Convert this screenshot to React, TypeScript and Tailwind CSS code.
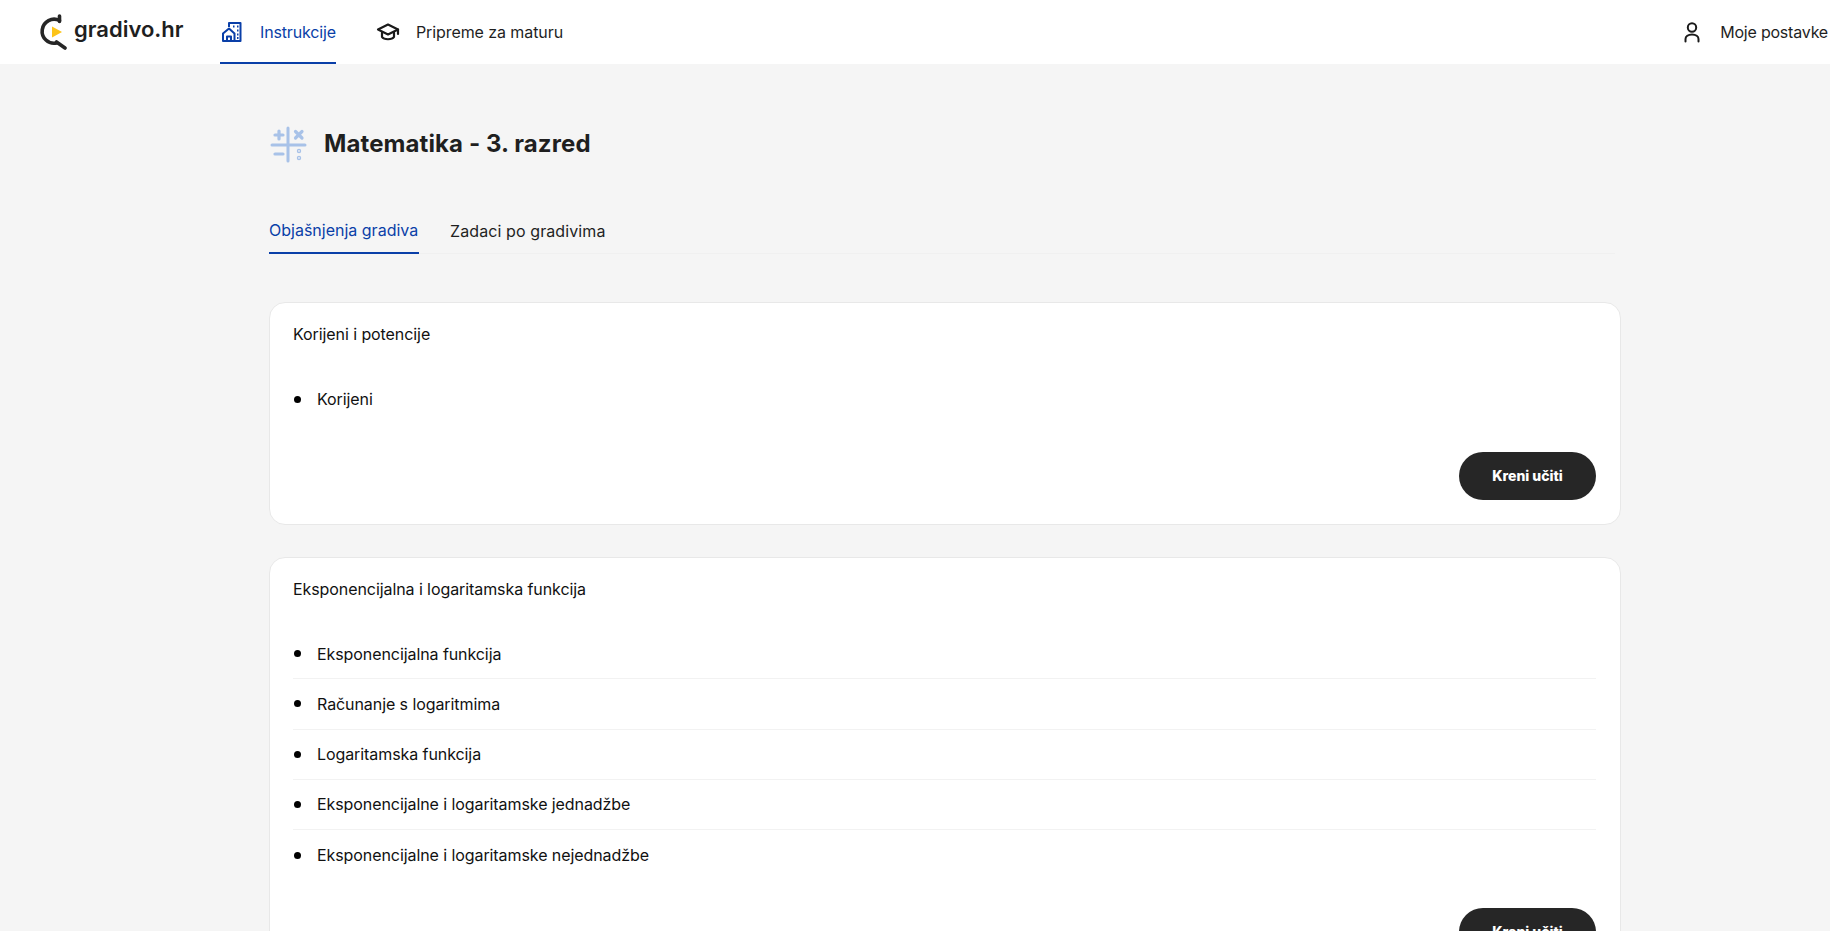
import React from 'react';

const topics = [
  {
    title: 'Korijeni i potencije',
    items: ['Korijeni'],
  },
  {
    title: 'Eksponencijalna i logaritamska funkcija',
    items: [
      'Eksponencijalna funkcija',
      'Računanje s logaritmima',
      'Logaritamska funkcija',
      'Eksponencijalne i logaritamske jednadžbe',
      'Eksponencijalne i logaritamske nejednadžbe',
    ],
  },
];

function Logo() {
  return (
    <svg width="30" height="36" viewBox="0 0 30 36" fill="none">
      <path d="M20.5 6.5 A12 12 0 1 0 17.5 29" stroke="#262626" strokeWidth="3.6" strokeLinecap="round" />
      <path d="M20.5 2 V7.5 M17.5 28 L26 34" stroke="#262626" strokeWidth="3.6" strokeLinecap="round" />
      <path d="M13 12.5 L23 18 L13 23.5 Z" fill="#fcc419" />
    </svg>
  );
}

function BuildingIcon() {
  return (
    <svg width="24" height="24" viewBox="0 0 24 24" fill="none" stroke="#0a3fa8" strokeWidth="2" strokeLinejoin="round">
      <path d="M9 7 V3 H20.5 V21 H3 V13.5 L9 8.5 L14.5 13.5 V21" />
      <path d="M7 21 V16.5 H11 V21" />
      <path d="M13 6.5 H14.5 M17 6.5 H18.5 M17 10.5 H18.5 M17 14.5 H18.5 M17 18 H18.5" strokeWidth="1.8" />
    </svg>
  );
}

function CapIcon() {
  return (
    <svg width="24" height="24" viewBox="0 0 24 24" fill="none" stroke="#1a1a1a" strokeWidth="2.2" strokeLinejoin="round" strokeLinecap="round">
      <path d="M12 4.5 L22 9.5 L12 14.5 L2 9.5 Z" />
      <path d="M6 12.5 V17 C8 20 16 20 18 17 V12.5" />
      <path d="M22 9.5 V14" />
    </svg>
  );
}

function UserIcon() {
  return (
    <svg width="24" height="24" viewBox="0 0 24 24" fill="none" stroke="#1a1a1a" strokeWidth="2" strokeLinecap="round">
      <circle cx="12" cy="7.5" r="4.2" />
      <path d="M5.5 21.5 V19 C5.5 16.5 8 14.5 12 14.5 C16 14.5 18.5 16.5 18.5 19 V21.5" />
    </svg>
  );
}

function MathIcon() {
  return (
    <svg width="38" height="38" viewBox="0 0 38 38" fill="none" stroke="#a8c2e8" strokeWidth="3.2" strokeLinecap="round">
      <path d="M19 3 V36 M3 20 H36" strokeWidth="3" />
      <path d="M6 10 H14 M10 6 V14 M6 29 H14" />
      <path d="M26.5 6.5 L33 13 M33 6.5 L26.5 13" />
      <circle cx="30" cy="26" r="0.6" fill="#a8c2e8" />
      <circle cx="30" cy="33" r="0.6" fill="#a8c2e8" />
    </svg>
  );
}

export default function App() {
  return (
    <div className="h-screen overflow-hidden bg-[#f5f5f5] font-['Inter',sans-serif] text-[#1f1f1f]">
      <header className="h-16 bg-white flex items-stretch pl-[39px] pr-0.5">
        <div className="flex items-center gap-[5px] w-[181px]">
          <Logo />
          <span className="text-[22px] font-semibold leading-none mb-1.5">gradivo.hr</span>
        </div>
        <nav className="flex items-stretch gap-10 tracking-[-0.08px]">
          <a className="flex items-center gap-4 border-b-2 border-[#0a3fa8] text-[#0a3fa8] pt-0.5">
            <BuildingIcon />
            <span className="text-base tracking-[-0.15px]">Instrukcije</span>
          </a>
          <a className="flex items-center gap-4 border-b-2 border-transparent pt-0.5">
            <CapIcon />
            <span className="text-base">Pripreme za maturu</span>
          </a>
        </nav>
        <div className="ml-auto flex items-center gap-4">
          <UserIcon />
          <span className="text-base tracking-[-0.2px]">Moje postavke</span>
        </div>
      </header>

      <main className="w-[1352px] ml-[269px] pt-[60px]">
        <div className="flex items-center gap-[17px] h-10">
          <MathIcon />
          <h1 className="text-2xl font-bold tracking-[0.1px]">Matematika - 3. razred</h1>
        </div>

        <div className="mt-[46px] flex gap-[31px] border-b border-[#f0f0f0] mr-[6px] h-[44px]">
          <button className="w-[150px] text-left text-base text-[#0a3fa8] border-b-2 border-[#0a3fa8] h-[44px] -mb-px pb-0.5">Objašnjenja gradiva</button>
          <button className="text-base h-[44px] pb-0.5 tracking-[0.1px]">Zadaci po gradivima</button>
        </div>

        <div className="mt-[48px] flex flex-col gap-8">
          {topics.map((topic) => (
            <section key={topic.title} className="bg-white border border-[#e8e8e8] rounded-2xl pl-[23px] pr-6 pt-[19px] pb-6">
              <h2 className="text-base h-6 leading-6 text-[#111] tracking-[-0.08px]">{topic.title}</h2>
              <ul className="mt-7">
                {topic.items.map((item) => (
                  <li key={item} className="h-[50.2px] flex items-center gap-4 border-b border-[#f2f2f2] last:border-b-0 text-base text-[#111] tracking-[-0.08px]">
                    <span className="w-[7px] h-[7px] rounded-full bg-black ml-[1px]" />
                    {item}
                  </li>
                ))}
              </ul>
              <div className="mt-7 flex justify-end">
                <button className="w-[137px] h-12 rounded-full bg-[#262626] text-white text-sm font-extrabold">Kreni učiti</button>
              </div>
            </section>
          ))}
        </div>
      </main>
    </div>
  );
}
